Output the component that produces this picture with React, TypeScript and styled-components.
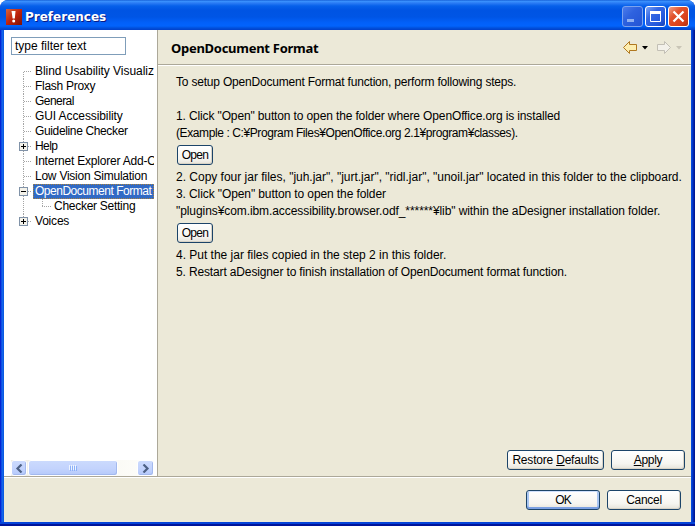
import React from 'react';
import styled, { createGlobalStyle, css } from 'styled-components';

const Global = createGlobalStyle`
  * { box-sizing: border-box; }
  body { margin: 0; background: #fff; overflow: hidden; }
`;

const Window = styled.div`
  width: 695px;
  height: 526px;
  display: flex;
  flex-direction: column;
  padding: 0 4px 4px;
  border-radius: 8px 8px 0 0;
  background: linear-gradient(90deg, #0019cf 0, #0831d9 1px, #166aee 2px, #0855dd 4px, #0855dd 691px, #0441d8 692px, #001ea0 694px, #00138c 695px);
  box-shadow: inset 0 -2px 0 #00149a, inset 0 -4px 0 #0544d9;
  font: 12px/15px "Liberation Sans", "Noto Sans CJK JP", sans-serif;
  color: #000;
  overflow: hidden;
`;

const TitleBar = styled.header`
  height: 30px;
  flex: none;
  margin: 0 -4px;
  padding: 3px 6px 0;
  display: flex;
  align-items: center;
  background: linear-gradient(180deg, #0a50cc 0, #3d95ff 1px, #2b7cf5 3px, #0660ea 6px, #0054e3 10px, #0055e5 17px, #0261fa 23px, #0263fc 26px, #0150dc 28px, #0140ca 30px);
`;

const Title = styled.h1`
  flex: 1;
  margin: 0 0 0 3px;
  font: bold 12px/20px "DejaVu Sans", sans-serif;
  color: #fff;
  text-shadow: 1px 1px 0 #0a1883;
`;

const WinButtons = styled.div`
  display: flex;
  gap: 2px;
`;

const WinButton = styled.button<{ $kind: 'min' | 'max' | 'close' }>`
  width: 21px;
  height: 21px;
  padding: 0;
  display: grid;
  place-items: center;
  border: 1px solid ${p => (p.$kind === 'min' ? '#7ba2ee' : '#fff')};
  border-radius: 3px;
  background: ${p =>
    p.$kind === 'close'
      ? 'linear-gradient(135deg, #f0a088 0, #e2522c 35%, #d8401a 75%, #b03010 100%)'
      : p.$kind === 'max'
        ? 'linear-gradient(135deg, #7da5f5 0, #3568e4 35%, #2257dc 75%, #1742b4 100%)'
        : 'linear-gradient(135deg, #4c7ceb 0, #2e62df 40%, #2454d4 100%)'};
`;

const Body = styled.div`
  height: 446px;
  flex: none;
  display: flex;
  background: #ece9d8;
`;

const Sidebar = styled.aside`
  width: 154px;
  flex: none;
  padding: 7px 3px 0 7px;
  display: flex;
  flex-direction: column;
  background: #fff;
  border-right: 1px solid #aca899;
`;

const Filter = styled.div`
  width: 115px;
  height: 18px;
  flex: none;
  padding: 0 3px;
  border: 1px solid #7f9db9;
  line-height: 17px;
  white-space: nowrap;
`;

const Tree = styled.ul`
  list-style: none;
  margin: 9px 0 0;
  padding: 0 0 0 8px;
  flex: 1;
  overflow: hidden;
`;

const TreeRow = styled.li`
  height: 15px;
  display: flex;
  align-items: stretch;
`;

const TreeLabel = styled.span<{ $on?: boolean; $ls: number }>`
  flex: ${p => (p.$on ? '1' : 'none')};
  padding-left: 2px;
  line-height: 14px;
  white-space: nowrap;
  letter-spacing: ${p => p.$ls}px;
  ${p =>
    p.$on &&
    css`
      background: #316ac5;
      color: #fff;
      outline: 1px dotted #a8813f;
      outline-offset: -1px;
    `}
`;

const TreeGuide = styled.svg`
  flex: none;
  display: block;
`;

const ScrollBar = styled.div`
  height: 16px;
  flex: none;
  display: flex;
  align-items: stretch;
  gap: 1px;
  background: linear-gradient(90deg, #f1efe6, #fefefb);
`;

const ScrollPiece = styled.div<{ $w: number }>`
  width: ${p => p.$w}px;
  display: grid;
  place-items: center;
  border: 1px solid #fff;
  border-radius: 3px;
  background: linear-gradient(180deg, #cbdafd, #c3d3fd 55%, #b5c9fa);
  box-shadow: inset -1px -1px 0 #a3b9ee;
`;

const Spacer = styled.div`
  flex: 1;
`;

const Main = styled.main`
  flex: 1;
  min-width: 0;
  display: flex;
  flex-direction: column;
`;

const PageHeader = styled.div`
  height: 36px;
  flex: none;
  display: flex;
  align-items: center;
  padding: 1px 5px 0 13px;
  border-bottom: 1px solid #fff;
  box-shadow: inset 0 -1px 0 #aca899;
`;

const PageTitle = styled.h2`
  flex: 1;
  margin: 0;
  font: bold 13px/20px "Noto Sans", sans-serif;
  letter-spacing: -0.28px;
`;

const Content = styled.section`
  flex: 1;
  display: flex;
  flex-direction: column;
  align-items: flex-start;
  padding: 8px 0 0 18px;
`;

const Line = styled.p<{ $ls: number }>`
  margin: 0;
  min-height: 17px;
  line-height: 17px;
  white-space: pre;
  letter-spacing: ${p => p.$ls}px;
`;

const Button = styled.button<{ $w: number; $ls: number; $primary?: boolean }>`
  width: ${p => p.$w}px;
  height: 20px;
  flex: none;
  padding: 0;
  border: 1px solid #1c4469;
  border-radius: 3px;
  background: linear-gradient(180deg, #fff 0, #f6f5f0 70%, #e6e3da 100%);
  box-shadow: ${p =>
    p.$primary
      ? 'inset 0 -2px 0 #7ba0e2, inset 0 1px 0 #cfe0fc, inset 2px 0 0 #a9c6f2, inset -2px 0 0 #a9c6f2'
      : 'inset -1px -1px 0 #d8d3c6'};
  font: inherit;
  line-height: 18px;
  color: #000;
  letter-spacing: ${p => p.$ls}px;
  white-space: nowrap;
`;

const OpenButton = styled(Button)`
  margin: 3px 0 4px 1px;
`;

const ButtonRow = styled.div`
  flex: none;
  display: flex;
  justify-content: flex-end;
  gap: 7px;
  padding: 0 6px 6px 0;
`;

const Footer = styled.footer`
  height: 46px;
  flex: none;
  display: flex;
  justify-content: flex-end;
  gap: 7px;
  padding: 13px 10px 0 0;
  border-top: 1px solid #aca899;
  background: #ece9d8;
  box-shadow: inset 0 1px 0 #fff;
`;

type Item = {
  label: string;
  ls: number;
  kind?: 'plus' | 'minus';
  child?: boolean;
  on?: boolean;
  last?: boolean;
  first?: boolean;
};

const items: Item[] = [
  { label: 'Blind Usability Visualiz', ls: -0.04, first: true },
  { label: 'Flash Proxy', ls: -0.28 },
  { label: 'General', ls: -0.55 },
  { label: 'GUI Accessibility', ls: -0.1 },
  { label: 'Guideline Checker', ls: -0.36 },
  { label: 'Help', ls: -0.6, kind: 'plus' },
  { label: 'Internet Explorer Add-O', ls: -0.2 },
  { label: 'Low Vision Simulation', ls: -0.24 },
  { label: 'OpenDocument Format', ls: -0.48, kind: 'minus', on: true },
  { label: 'Checker Setting', ls: -0.27, child: true },
  { label: 'Voices', ls: -0.2, kind: 'plus', last: true },
];

const Guide = ({ item }: { item: Item }) => {
  const w = item.child ? 33 : 14;
  return (
    <TreeGuide width={w} height="15" shapeRendering="crispEdges">
      <g stroke="#a5a5a5" strokeDasharray="1 1">
        <path d={`M4.5 ${item.first ? 8 : 0}V${item.last ? 8 : 15}`} />
        {item.child ? <path d="M23.5 0V7M23 7.5H32" /> : <path d="M5 7.5H13" />}
      </g>
      {item.kind && (
        <g>
          <rect x="0.5" y="3.5" width="8" height="8" fill="#f4f2ea" stroke="#8092a8" />
          <path d={item.kind === 'plus' ? 'M2 7.5H7M4.5 5V10' : 'M2 7.5H7'} stroke="#000" />
        </g>
      )}
    </TreeGuide>
  );
};

const AppIcon = () => (
  <svg width="16" height="16">
    <defs>
      <linearGradient id="app" x1="0" y1="0" x2="1" y2="1">
        <stop offset="0" stopColor="#d8643c" />
        <stop offset="0.5" stopColor="#c0230c" />
        <stop offset="1" stopColor="#7c1206" />
      </linearGradient>
    </defs>
    <rect width="16" height="16" fill="url(#app)" />
    <path d="M5.5 2h4L8.8 9.5H6.6z" fill="#fff" />
    <circle cx="7.7" cy="12" r="1.5" fill="#fff" />
  </svg>
);

const NavIcons = () => (
  <svg width="64" height="16">
    <path d="M1.5 7.5L7.5 1.5V4.5H14.5V10.5H7.5V13.5Z" fill="#fdeeb0" stroke="#b07820" />
    <path d="M20 6H26L23 9.5Z" fill="#000" />
    <path d="M48.5 7.5L42.5 1.5V4.5H35.5V10.5H42.5V13.5Z" fill="#f3f1ea" stroke="#c2bfb5" />
    <path d="M54 6H60L57 9.5Z" fill="#c9c5b6" />
  </svg>
);

export default function App() {
  return (
    <>
      <Global />
      <Window>
        <TitleBar>
          <AppIcon />
          <Title>Preferences</Title>
          <WinButtons>
            <WinButton $kind="min" aria-label="Minimize">
              <svg width="19" height="19"><path d="M4 13.5H11" stroke="#8fb0f2" strokeWidth="3" /></svg>
            </WinButton>
            <WinButton $kind="max" aria-label="Maximize">
              <svg width="19" height="19"><path d="M4.5 5V14.5H14.5V5" fill="none" stroke="#fff" /><path d="M4 5.5H15" stroke="#fff" strokeWidth="3" /></svg>
            </WinButton>
            <WinButton $kind="close" aria-label="Close">
              <svg width="19" height="19"><path d="M4.5 4.5L14.5 14.5M14.5 4.5L4.5 14.5" stroke="#fff" strokeWidth="2.2" /></svg>
            </WinButton>
          </WinButtons>
        </TitleBar>
        <Body>
          <Sidebar>
            <Filter>type filter text</Filter>
            <Tree>
              {items.map(item => (
                <TreeRow key={item.label}>
                  <Guide item={item} />
                  <TreeLabel $on={item.on} $ls={item.ls}>{item.label}</TreeLabel>
                </TreeRow>
              ))}
            </Tree>
            <ScrollBar>
              <ScrollPiece $w={16}>
                <svg width="9" height="9"><path d="M6.5 0.5L2.5 4.5L6.5 8.5" fill="none" stroke="#4d6185" strokeWidth="2.2" /></svg>
              </ScrollPiece>
              <ScrollPiece $w={90}>
                <svg width="8" height="6" shapeRendering="crispEdges">
                  <path d="M0.5 0V5M2.5 0V5M4.5 0V5M6.5 0V5" stroke="#eef4fe" />
                  <path d="M1.5 1V6M3.5 1V6M5.5 1V6M7.5 1V6" stroke="#8cb0f8" />
                </svg>
              </ScrollPiece>
              <Spacer />
              <ScrollPiece $w={17}>
                <svg width="9" height="9"><path d="M2.5 0.5L6.5 4.5L2.5 8.5" fill="none" stroke="#4d6185" strokeWidth="2.2" /></svg>
              </ScrollPiece>
            </ScrollBar>
          </Sidebar>
          <Main>
            <PageHeader>
              <PageTitle>OpenDocument Format</PageTitle>
              <NavIcons />
            </PageHeader>
            <Content>
              <Line $ls={-0.2}>To setup OpenDocument Format function, perform following steps.</Line>
              <Line $ls={0}> </Line>
              <Line $ls={-0.13}>1. Click "Open" button to open the folder where OpenOffice.org is installed</Line>
              <Line $ls={-0.4}>(Example : C:¥Program Files¥OpenOffice.org 2.1¥program¥classes).</Line>
              <OpenButton $w={36} $ls={-0.7}>Open</OpenButton>
              <Line $ls={-0.01}>2. Copy four jar files, "juh.jar", "jurt.jar", "ridl.jar", "unoil.jar" located in this folder to the clipboard.</Line>
              <Line $ls={-0.1}>3. Click "Open" button to open the folder</Line>
              <Line $ls={-0.08}>"plugins¥com.ibm.accessibility.browser.odf_******¥lib" within the aDesigner installation folder.</Line>
              <OpenButton $w={36} $ls={-0.7}>Open</OpenButton>
              <Line $ls={-0.01}>4. Put the jar files copied in the step 2 in this folder.</Line>
              <Line $ls={-0.14}>5. Restart aDesigner to finish installation of OpenDocument format function.</Line>
            </Content>
            <ButtonRow>
              <Button $w={97} $ls={-0.2}>Restore <u>D</u>efaults</Button>
              <Button $w={74} $ls={-0.3}><u>A</u>pply</Button>
            </ButtonRow>
          </Main>
        </Body>
        <Footer>
          <Button $w={74} $ls={-0.8} $primary>OK</Button>
          <Button $w={74} $ls={-0.3}>Cancel</Button>
        </Footer>
      </Window>
    </>
  );
}
